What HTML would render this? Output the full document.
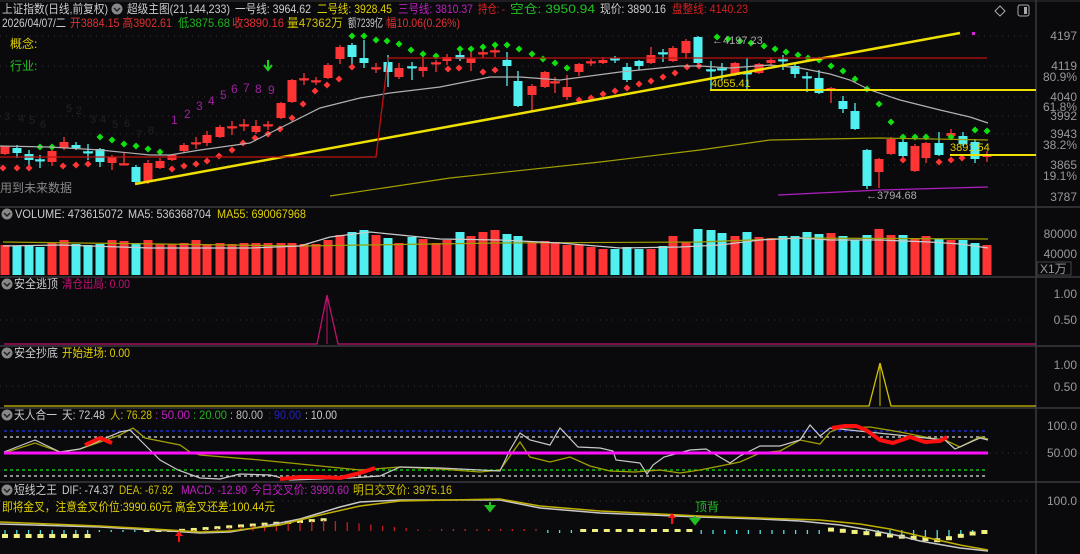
<!DOCTYPE html>
<html><head><meta charset="utf-8">
<style>
html,body{margin:0;padding:0;background:#0a0a0d;}
svg{display:block;font-family:"Liberation Sans","Noto Sans CJK SC",sans-serif;font-size:12px;}
</style></head>
<body>
<svg id="s" width="1080" height="554" viewBox="0 0 1080 554" xmlns="http://www.w3.org/2000/svg">
<rect width="1080" height="554" fill="#0a0a0d"/>
<g stroke="#3a3a3e" stroke-width="1.5">
<line x1="0" y1="207" x2="1080" y2="207"/>
<line x1="0" y1="277" x2="1080" y2="277"/>
<line x1="0" y1="346" x2="1080" y2="346"/>
<line x1="0" y1="408" x2="1080" y2="408"/>
<line x1="0" y1="482" x2="1080" y2="482"/>
<line x1="1036" y1="0" x2="1036" y2="554"/>
</g>
<line x1="0" y1="1" x2="1080" y2="1" stroke="#333" />
<g stroke="#333" stroke-dasharray="1 5">
<line x1="0" y1="36" x2="1030" y2="36"/><line x1="0" y1="66" x2="1030" y2="66"/>
<line x1="0" y1="97" x2="1030" y2="97"/><line x1="0" y1="116" x2="1030" y2="116"/>
<line x1="0" y1="134" x2="1030" y2="134"/><line x1="0" y1="165" x2="1030" y2="165"/>
<line x1="0" y1="320" x2="1030" y2="320"/><line x1="0" y1="386" x2="1030" y2="386"/>
<line x1="0" y1="501" x2="1030" y2="501"/><line x1="990" y1="453" x2="1030" y2="453"/>
</g>
<!-- header -->
<g lengthAdjust="spacingAndGlyphs">
<text x="2" y="13" fill="#ccc" textLength="106" lengthAdjust="spacingAndGlyphs">上证指数(日线,前复权)</text>
<text x="127" y="13" fill="#ccc" textLength="103" lengthAdjust="spacingAndGlyphs">超级主图(21,144,233)</text>
<text x="235" y="13" fill="#ccc" textLength="76" lengthAdjust="spacingAndGlyphs">一号线: 3964.62</text>
<text x="317" y="13" fill="#e0d000" textLength="75" lengthAdjust="spacingAndGlyphs">二号线: 3928.45</text>
<text x="398" y="13" fill="#c020c0" textLength="75" lengthAdjust="spacingAndGlyphs">三号线: 3810.37</text>
<text x="478" y="13" fill="#e02020" textLength="27" lengthAdjust="spacingAndGlyphs">持仓: -</text>
<text x="510" y="13" fill="#20c020" textLength="85" lengthAdjust="spacingAndGlyphs">空仓: 3950.94</text>
<text x="600" y="13" fill="#ccc" textLength="66" lengthAdjust="spacingAndGlyphs">现价: 3890.16</text>
<text x="672" y="13" fill="#d02020" textLength="76" lengthAdjust="spacingAndGlyphs">盘整线: 4140.23</text>
<text x="2" y="27" fill="#ccc" textLength="64" lengthAdjust="spacingAndGlyphs">2026/04/07/二</text>
<text x="70" y="27" fill="#e03030" textLength="102" lengthAdjust="spacingAndGlyphs">开3884.15 高3902.61</text>
<text x="178" y="27" fill="#20b020" textLength="52" lengthAdjust="spacingAndGlyphs">低3875.68</text>
<text x="232" y="27" fill="#e03030" textLength="52" lengthAdjust="spacingAndGlyphs">收3890.16</text>
<text x="287" y="27" fill="#d0c000" textLength="56" lengthAdjust="spacingAndGlyphs">量47362万</text>
<text x="348" y="27" fill="#ccc" textLength="35" lengthAdjust="spacingAndGlyphs">额7239亿</text>
<text x="386" y="27" fill="#e03030" textLength="74" lengthAdjust="spacingAndGlyphs">幅10.06(0.26%)</text>
</g>
<circle cx="117" cy="9" r="5.5" fill="#888"/><path d="M114 8l3 3 3-3" stroke="#222" stroke-width="1.5" fill="none"/>
<path d="M995 11l5-5 5 5-5 5z" stroke="#aaa" fill="none"/>
<rect x="1018" y="5" width="11" height="11" rx="2" stroke="#aaa" fill="none"/><rect x="1024" y="7" width="3" height="7" fill="#aaa"/>
<text x="10" y="48" fill="#e0d000">概念:</text>
<text x="10" y="70" fill="#20c020">行业:</text>
<text x="0" y="192" fill="#888">用到未来数据</text>
<g fill="#999" text-anchor="end" font-size="12">
<text x="1077" y="40">4197</text><text x="1077" y="70">4119</text><text x="1077" y="81">80.9%</text>
<text x="1077" y="101">4040</text><text x="1077" y="111">61.8%</text><text x="1077" y="120">3992</text>
<text x="1077" y="138">3943</text><text x="1077" y="149">38.2%</text><text x="1077" y="169">3865</text>
<text x="1077" y="180">19.1%</text><text x="1077" y="201">3787</text>
<text x="1077" y="238">80000</text><text x="1077" y="258">40000</text>
<text x="1077" y="298">1.00</text><text x="1077" y="324">0.50</text>
<text x="1077" y="369">1.00</text><text x="1077" y="391">0.50</text>
<text x="1077" y="430">100.0</text><text x="1077" y="457">50.00</text>
<text x="1077" y="505">100.0</text>
</g>
<rect x="1037" y="262" width="34" height="13" fill="none" stroke="#444"/><text x="1040" y="273" fill="#999">X1万</text>
<g id="main"></g>
<polyline fill="none" stroke="#b0b0b0" stroke-width="1.2" points="0,146 50,147 100,150 150,155 170,155 200,150 250,143 280,128 320,108 360,98 390,93 440,87 490,77 520,77 560,80 620,72 680,66 700,66 730,68 770,65 800,68 830,74 850,80 870,90 900,100 940,110 970,117 988,123"/>
<polyline fill="none" stroke="#a0a000" stroke-width="1.2" points="330,196 450,178 600,162 700,150 770,140 880,138 988,140"/>
<line x1="135" y1="184" x2="960" y2="33" stroke="#f0e000" stroke-width="2.5"/>
<polyline fill="none" stroke="#c01010" stroke-width="1.3" points="0,157 376,157 388,58 987,58"/>
<line x1="710" y1="90" x2="1036" y2="90" stroke="#f0e000" stroke-width="2"/>
<line x1="950" y1="155" x2="1036" y2="155" stroke="#f0e000" stroke-width="2"/>
<polyline fill="none" stroke="#b020c0" stroke-width="1.3" points="778,195 880,190 988,187"/>
<rect x="972" y="32" width="3" height="3" fill="#e020e0"/>
<text x="711" y="87" fill="#e0d000" font-size="11">4055.41</text>
<text x="950" y="151" fill="#e0d000" font-size="11">3891.54</text>
<text x="712" y="44" fill="#aaa" font-size="11">←4197.23</text>
<text x="866" y="199" fill="#aaa" font-size="11">←3794.68</text>
<g fill="#a020a0" font-size="12">
<text x="171" y="124">1</text><text x="184" y="118">2</text><text x="196" y="110">3</text><text x="208" y="105">4</text><text x="220" y="99">5</text><text x="231" y="93">6</text><text x="243" y="92">7</text><text x="255" y="93">8</text><text x="268" y="94">9</text>
</g>
<g fill="#222" font-size="11"><text x="4" y="120">3</text><text x="18" y="122">4</text><text x="29" y="124">5</text><text x="40" y="128">6</text><text x="66" y="112">5</text><text x="76" y="114">2</text><text x="90" y="123">3</text><text x="100" y="123">4</text><text x="112" y="128">5</text><text x="124" y="127">6</text><text x="136" y="138">7</text><text x="148" y="134">8</text></g>
<path d="M268 60v9M264 65l4 5 4-5" stroke="#20d020" stroke-width="2" fill="none"/>
<!-- volume header -->
<circle cx="7" cy="214" r="5.5" fill="#888"/><path d="M4 213l3 3 3-3" stroke="#222" stroke-width="1.5" fill="none"/>
<text x="15" y="218" fill="#ccc" textLength="108" lengthAdjust="spacingAndGlyphs">VOLUME: 473615072</text>
<text x="128" y="218" fill="#ccc" textLength="83" lengthAdjust="spacingAndGlyphs">MA5: 536368704</text>
<text x="217" y="218" fill="#e0d000" textLength="89" lengthAdjust="spacingAndGlyphs">MA55: 690067968</text>
<g id="vol"></g>
<polyline fill="none" stroke="#a0a000" stroke-width="1.2" points="3,242 160,244 300,246 500,243 700,242 800,238 988,239"/>
<polyline fill="none" stroke="#ccc" stroke-width="1.2" points="3,246 60,245 150,248 250,248 300,246 330,237 370,232 400,235 440,239 500,240 560,243 620,248 680,247 720,245 760,240 800,238 830,240 880,240 930,242 960,244 988,248"/>
<!-- 安全逃顶 -->
<circle cx="7" cy="284" r="5.5" fill="#888"/><path d="M4 283l3 3 3-3" stroke="#222" stroke-width="1.5" fill="none"/>
<text x="14" y="288" fill="#ccc" textLength="44" lengthAdjust="spacingAndGlyphs">安全逃顶</text>
<text x="62" y="288" fill="#c01070" textLength="68" lengthAdjust="spacingAndGlyphs">清仓出局: 0.00</text>
<polyline fill="none" stroke="#c01070" stroke-width="1.3" points="4,344 306,344 317,344 327,295 338,344 1036,344"/>
<line x1="327" y1="295" x2="327" y2="344" stroke="#c01070"/>
<!-- 安全抄底 -->
<circle cx="7" cy="353" r="5.5" fill="#888"/><path d="M4 352l3 3 3-3" stroke="#222" stroke-width="1.5" fill="none"/>
<text x="14" y="357" fill="#ccc" textLength="44" lengthAdjust="spacingAndGlyphs">安全抄底</text>
<text x="62" y="357" fill="#e0d000" textLength="68" lengthAdjust="spacingAndGlyphs">开始进场: 0.00</text>
<polyline fill="none" stroke="#d0c000" stroke-width="1.3" points="4,406 869,406 880,363 891,406 1036,406"/>
<line x1="880" y1="363" x2="880" y2="406" stroke="#d0c000"/>
<!-- 天人合一 -->
<circle cx="7" cy="415" r="5.5" fill="#888"/><path d="M4 414l3 3 3-3" stroke="#222" stroke-width="1.5" fill="none"/>
<text x="14" y="419" fill="#ccc" textLength="43" lengthAdjust="spacingAndGlyphs">天人合一</text>
<text x="62" y="419" fill="#ccc" textLength="43" lengthAdjust="spacingAndGlyphs">天: 72.48</text>
<text x="110" y="419" fill="#d0c000" textLength="42" lengthAdjust="spacingAndGlyphs">人: 76.28</text>
<text x="155" y="419" fill="#c020c0" textLength="35" lengthAdjust="spacingAndGlyphs">: 50.00</text>
<text x="193" y="419" fill="#20b020" textLength="34" lengthAdjust="spacingAndGlyphs">: 20.00</text>
<text x="230" y="419" fill="#bbb" textLength="33" lengthAdjust="spacingAndGlyphs">: 80.00</text>
<text x="268" y="419" fill="#2020c0" textLength="33" lengthAdjust="spacingAndGlyphs">: 90.00</text>
<text x="305" y="419" fill="#ccc" textLength="32" lengthAdjust="spacingAndGlyphs">: 10.00</text>
<line x1="4" y1="431" x2="988" y2="431" stroke="#2030c0" stroke-dasharray="3 3" stroke-width="1.5"/>
<line x1="4" y1="437" x2="988" y2="437" stroke="#bbb" stroke-dasharray="3 3" stroke-width="1.5"/>
<line x1="4" y1="470" x2="988" y2="470" stroke="#10c010" stroke-dasharray="3 3" stroke-width="1.5"/>
<line x1="4" y1="476" x2="988" y2="476" stroke="#bbb" stroke-dasharray="3 3" stroke-width="1.5"/>
<polyline fill="none" stroke="#a0a000" stroke-width="1.3" points="4,453 35,443 60,452 80,449 120,435 133,428 145,438 180,445 190,452 200,455 260,460 300,464 360,470 400,467 440,469 480,472 500,470 520,442 530,457 550,462 570,457 590,466 610,471 635,472 660,470 680,473 700,470 720,466 740,462 760,453 780,451 800,440 820,444 830,432 840,428 870,427 900,432 930,438 945,440 960,447 980,437 988,439"/>
<polyline fill="none" stroke="#c8c8c8" stroke-width="1.2" points="4,452 35,440 60,452 80,449 120,432 130,430 140,440 160,460 178,470 200,478 220,479 240,474 270,475 290,480 350,478 380,476 400,467 440,468 480,470 500,471 510,450 520,433 530,440 550,445 560,428 578,447 600,448 613,451 616,460 640,463 647,474 653,465 664,457 690,450 706,449 730,463 740,456 760,446 780,446 800,440 810,425 820,436 830,428 945,440 955,449 980,438 988,440"/>
<line x1="4" y1="453" x2="988" y2="453" stroke="#ff10ff" stroke-width="3"/>
<polyline fill="none" stroke="#ff1010" stroke-width="4" stroke-linejoin="round" points="85,445 100,438 112,443"/>
<polyline fill="none" stroke="#ff1010" stroke-width="4" stroke-linejoin="round" points="280,479 300,477 320,477 340,478 360,473 375,468"/>
<polyline fill="none" stroke="#ff1010" stroke-width="4" stroke-linejoin="round" points="832,428 845,426 856,426 866,430 880,440 893,443 910,437 925,442 940,441 947,437"/>
<!-- 短线之王 -->
<circle cx="7" cy="490" r="5.5" fill="#888"/><path d="M4 489l3 3 3-3" stroke="#222" stroke-width="1.5" fill="none"/>
<text x="14" y="494" fill="#ccc" textLength="43" lengthAdjust="spacingAndGlyphs">短线之王</text>
<text x="62" y="494" fill="#ccc" textLength="52" lengthAdjust="spacingAndGlyphs">DIF: -74.37</text>
<text x="119" y="494" fill="#d0c000" textLength="54" lengthAdjust="spacingAndGlyphs">DEA: -67.92</text>
<text x="181" y="494" fill="#c020c0" textLength="66" lengthAdjust="spacingAndGlyphs">MACD: -12.90</text>
<text x="251" y="494" fill="#c020c0" textLength="98" lengthAdjust="spacingAndGlyphs">今日交叉价: 3990.60</text>
<text x="353" y="494" fill="#d0c000" textLength="99" lengthAdjust="spacingAndGlyphs">明日交叉价: 3975.16</text>
<text x="2" y="511" fill="#e0d000" textLength="273" lengthAdjust="spacingAndGlyphs">即将金叉，注意金叉价位:3990.60元 离金叉还差:100.44元</text>
<g id="macd"></g>
<polyline fill="none" stroke="#c8c8c8" stroke-width="1.5" points="0,524 100,527 170,531 200,533 230,532 260,527 300,519 340,507 360,502 400,500 500,500 540,508 600,513 700,517 760,519 800,521 840,525 870,530 900,536 920,541 960,548 988,551"/>
<polyline fill="none" stroke="#c0b000" stroke-width="1.5" points="0,522 100,526 170,530 200,532 230,531 280,525 320,515 360,506 400,501 500,499 540,506 600,511 700,516 760,518 820,520 860,524 890,529 920,536 960,545 988,550"/>
<path d="M179 531l-4 5h3v6h2v-6h3z" fill="#ff1010"/>
<path d="M672 513l-4 5h3v6h2v-6h3z" fill="#ff1010"/>
<path d="M490 502v5M486 506l4 5 4-5z" stroke="#20c020" fill="#20c020" stroke-width="2"/>
<path d="M695 516v4M691 519l4 5 4-5z" stroke="#20c020" fill="#20c020" stroke-width="2"/>
<text x="695" y="511" fill="#20c020">顶背</text>
</svg>
<script>
var NS="http://www.w3.org/2000/svg";
function el(p,t,a){var e=document.createElementNS(NS,t);for(var k in a)e.setAttribute(k,a[k]);p.appendChild(e);return e;}
var R="#ff3535",C="#50f0f0",G="#10e010";
var cs=[[5,146,154,'r',146,155],[17,148,153,'c',145,158],[29,154,160,'c',150,165],[40,160,160,'c',155,168],[52,151,162,'r',148,166],[64,142,148,'r',137,150],[76,145,148,'c',142,150],[88,152,152,'c',144,160],[100,149,162,'c',148,167],[112,157,163,'r',155,170],[124,164,164,'r',153,165],[136,167,182,'c',165,183],[148,163,182,'r',160,184],[160,161,168,'r',158,169],[172,155,160,'r',154,161],[184,145,151,'r',143,153],[196,143,143,'r',137,149],[207,135,143,'r',131,146],[220,127,137,'r',125,138],[232,127,127,'r',121,135],[244,125,125,'r',119,131],[256,126,132,'r',120,134],[268,125,125,'r',121,130],[281,103,118,'r',102,119],[292,80,102,'r',79,103],[304,79,79,'r',73,85],[316,81,81,'r',77,85],[328,65,78,'r',63,79],[340,47,59,'r',45,64],[352,45,57,'c',43,70],[364,58,63,'c',40,68],[376,68,68,'r',63,73],[388,62,72,'c',55,87],[399,68,77,'r',63,79],[412,67,67,'c',62,80],[423,67,71,'r',57,77],[436,63,63,'r',60,72],[447,57,61,'r',54,65],[460,55,59,'c',49,61],[471,58,63,'r',52,71],[483,53,53,'r',46,58],[495,51,51,'r',45,57],[507,60,66,'c',52,86],[518,81,106,'c',71,107],[532,86,95,'r',84,112],[545,72,87,'r',71,88],[555,82,82,'r',77,93],[567,87,97,'r',75,100],[579,64,72,'r',63,76],[591,62,62,'r',59,66],[603,60,63,'r',57,64],[615,59,59,'c',56,63],[627,67,80,'c',63,82],[639,61,66,'c',60,70],[651,55,63,'r',47,64],[663,53,53,'c',49,62],[673,48,61,'r',46,62],[686,41,53,'r',39,59],[698,37,63,'c',36,64],[711,70,70,'c',61,90],[722,69,69,'c',63,80],[735,63,75,'r',62,76],[747,73,73,'c',58,90],[759,64,73,'r',63,74],[771,60,63,'r',58,66],[783,60,60,'c',55,70],[795,66,74,'c',62,78],[807,77,77,'c',72,92],[819,78,93,'c',70,94],[831,88,90,'r',87,103],[843,101,109,'c',96,113],[855,111,129,'c',103,130],[867,150,186,'c',149,189],[879,159,172,'r',158,188],[891,139,154,'r',137,155],[903,142,156,'c',137,158],[915,146,171,'r',144,172],[926,143,158,'r',142,163],[939,143,155,'c',132,156],[951,133,136,'r',129,139],[963,136,144,'c',132,146],[975,142,159,'c',139,163],[987,155,157,'r',151,162]];
var m=document.getElementById('main'),v=document.getElementById('vol');
var vh=[245,246,245,247,243,240,244,245,244,240,241,243,240,244,244,243,240,244,243,244,243,243,243,243,243,244,244,240,235,232,230,235,238,243,237,239,243,240,232,236,232,230,234,236,242,241,242,245,245,247,249,249,247,249,249,246,236,242,229,230,233,236,232,237,238,236,236,232,234,233,236,240,235,229,235,235,238,236,239,240,240,243,245,249];
cs.forEach(function(c,i){var col=c[3]=='r'?R:C;
 el(m,'line',{x1:c[0],x2:c[0],y1:c[4],y2:c[5],stroke:col,'stroke-width':1.3});
 var h=Math.max(c[2]-c[1],1.5);el(m,'rect',{x:c[0]-4.5,y:c[1],width:9,height:h,fill:col});
 if(c[2]-c[1]<2)el(m,'line',{x1:c[0]-5,x2:c[0]+5,y1:c[1],y2:c[1],stroke:col,'stroke-width':1.5});
 var t=vh[i]||242;el(v,'rect',{x:c[0]-4.5,y:t,width:9,height:275-t,fill:col});
});
function dots(arr,col){arr.forEach(function(p){el(m,'path',{d:'M'+p[0]+' '+(p[1]-3.5)+'l3.5 3.5-3.5 3.5-3.5-3.5z',fill:col});});}
dots([[40,147],[52,147],[100,137],[112,140],[124,144],[136,146],[148,149],[160,152],[352,36],[364,36],[376,40],[387,41],[399,44],[411,50],[423,54],[436,56],[460,49],[471,49],[483,47],[495,45],[507,45],[519,49],[532,54],[543,59],[555,63],[567,68],[717,37],[728,39],[740,41],[751,43],[764,46],[775,49],[786,52],[798,55],[808,58],[819,60],[831,66],[843,71],[855,79],[867,89],[879,104],[891,122],[903,137],[915,137],[926,137],[951,137],[975,130],[987,131]],G);
dots([[3,168],[17,168],[29,168],[63,166],[76,165],[88,164],[172,169],[184,166],[196,164],[207,161],[219,156],[232,150],[243,143],[255,138],[268,134],[280,129],[292,118],[303,104],[315,91],[327,85],[339,79],[352,67],[448,69],[459,68],[483,72],[495,70],[579,100],[591,98],[603,94],[615,91],[627,88],[639,84],[651,81],[663,77],[675,73],[687,67],[699,66],[903,160],[939,162],[951,160],[962,158]],R);
// MACD histogram
var mc=document.getElementById('macd');
function bar(x,t,b,col){el(mc,'line',{x1:x,x2:x,y1:t,y2:b,stroke:col,'stroke-width':1.3});}
function cap(x,y,w,h){el(mc,'rect',{x:x-3,y:y,width:6,height:h||4,fill:'#f0f080'});}
for(var i=0;i<84;i++){var x=5+i*11.8;
 if(x<90){bar(x,530,535,'#50e0e0');cap(x,534,6,4);}
 else if(x<175){bar(x,530,532,'#50e0e0');if(x>140)cap(x,530,6,2);}
 else if(x<335){var cy=531-(x-180)*0.075;cap(x,cy-2,6,3);bar(x,cy,531,'#c02020');}
 else if(x<430){bar(x,521+(x-335)*0.1,531,'#c02020');}
 else if(x<540){bar(x,529,531,'#c02020');}
 else if(x<700){if(x>575&&x<690)cap(x,529,6,3);else bar(x,530,533,'#50e0e0');}
 else if(x<825){bar(x,530,534,'#50e0e0');}
 else {var d=x<940?(x-825)*0.1:Math.max(3,11-(x-940)*0.2);bar(x,530,530+d,'#50e0e0');cap(x,530+d-3,6,4);}
}
</script>
</body></html>
